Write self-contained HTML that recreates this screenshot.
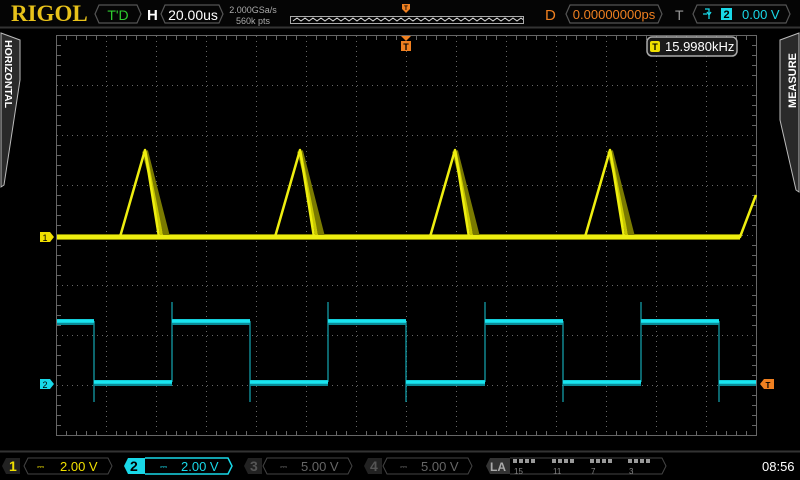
<!DOCTYPE html>
<html><head><meta charset="utf-8"><style>
body{margin:0;width:800px;height:480px;background:#000;overflow:hidden;font-family:"Liberation Sans",sans-serif}
svg{position:absolute;left:0;top:0}
</style></head><body>
<svg width="800" height="480" viewBox="0 0 800 480" xmlns="http://www.w3.org/2000/svg" font-family="Liberation Sans, sans-serif">
<defs><clipPath id="zz"><rect x="291" y="16" width="232" height="8"/></clipPath></defs>
<rect width="800" height="480" fill="#000"/>
<rect x="0" y="0" width="800" height="27" fill="#050505"/>
<line x1="0" y1="27.5" x2="800" y2="27.5" stroke="#333" stroke-width="2"/>
<text x="11" y="21" font-family="Liberation Serif, serif" font-weight="bold" font-size="23" fill="#e8c21a">RIGOL</text>
<path d="M99 5 L137 5 L141 14 L137 23 L99 23 L95 14 Z" fill="none" stroke="#555" stroke-width="1.2"/>
<text x="118" y="20" font-size="14" fill="#2ecc2e" text-anchor="middle">T'D</text>
<text x="147" y="20" font-size="15" font-weight="bold" fill="#fff">H</text>
<path d="M165 5 L219 5 L223 14 L219 23 L165 23 L161 14 Z" fill="none" stroke="#555" stroke-width="1.2"/>
<text x="193" y="20" font-size="14" fill="#fff" text-anchor="middle">20.00us</text>
<text x="253" y="13" font-size="9" fill="#aaa" text-anchor="middle">2.000GSa/s</text>
<text x="253" y="24" font-size="9" fill="#aaa" text-anchor="middle">560k pts</text>
<rect x="290.5" y="16.5" width="233" height="7" fill="none" stroke="#aaa"/>
<path clip-path="url(#zz)" d="M293 21 l4 -3 4 3 4 -3 4 3 4 -3 4 3 4 -3 4 3 4 -3 4 3 4 -3 4 3 4 -3 4 3 4 -3 4 3 4 -3 4 3 4 -3 4 3 4 -3 4 3 4 -3 4 3 4 -3 4 3 4 -3 4 3 4 -3 4 3 4 -3 4 3 4 -3 4 3 4 -3 4 3 4 -3 4 3 4 -3 4 3 4 -3 4 3 4 -3 4 3 4 -3 4 3 4 -3 4 3 4 -3 4 3 4 -3 4 3 4 -3 4 3 4 -3 4 3 4 -3 4 3 4 -3 4 3 4 -3 4 3 4 -3 4 3 4 -3 4 3" fill="none" stroke="#ddd" stroke-width="1"/>
<path d="M402 4 h8 v5 l-4 4 l-4 -4 Z" fill="#f08020"/><text x="406" y="10" font-size="6" fill="#000" text-anchor="middle" font-weight="bold">T</text>
<text x="545" y="20" font-size="15" fill="#f08020">D</text>
<path d="M570 5 L658 5 L662 14 L658 23 L570 23 L566 14 Z" fill="none" stroke="#555" stroke-width="1.2"/>
<text x="614" y="19" font-size="13" fill="#f08020" text-anchor="middle">0.00000000ps</text>
<text x="675" y="20" font-size="14" fill="#999">T</text>
<path d="M697 5 L786 5 L790 14 L786 23 L697 23 L693 14 Z" fill="none" stroke="#555" stroke-width="1.2"/>
<path d="M705 9 h4 v10 M707 12 l2 3 2 -3 M703 14 h4" stroke="#19d8e8" fill="none" stroke-width="1.3"/>
<rect x="721" y="8" width="11" height="12" fill="#19d8e8"/><text x="726.5" y="18" font-size="11" fill="#000" text-anchor="middle" font-weight="bold">2</text>
<text x="742" y="19" font-size="13" fill="#19d8e8">0.00 V</text>
<path d="M1 33 L20 40 L20 80 L4 185 L1 187 Z" fill="#2a2a2a" stroke="#bbb" stroke-width="1"/>
<text transform="translate(5,40) rotate(90)" font-size="10.5" font-weight="bold" fill="#fff">HORIZONTAL</text>
<path d="M799 33 L780 40 L780 120 L796 190 L799 192 Z" fill="#2a2a2a" stroke="#bbb" stroke-width="1"/>
<text transform="translate(796,108) rotate(-90)" font-size="11" font-weight="bold" fill="#fff">MEASURE</text>
<g stroke="#666" stroke-width="1" stroke-dasharray="1,4">
<line x1="106.5" y1="36" x2="106.5" y2="435"/><line x1="156.5" y1="36" x2="156.5" y2="435"/><line x1="206.5" y1="36" x2="206.5" y2="435"/><line x1="256.5" y1="36" x2="256.5" y2="435"/><line x1="306.5" y1="36" x2="306.5" y2="435"/><line x1="356.5" y1="36" x2="356.5" y2="435"/><line x1="406.5" y1="36" x2="406.5" y2="435"/><line x1="456.5" y1="36" x2="456.5" y2="435"/><line x1="506.5" y1="36" x2="506.5" y2="435"/><line x1="556.5" y1="36" x2="556.5" y2="435"/><line x1="606.5" y1="36" x2="606.5" y2="435"/><line x1="656.5" y1="36" x2="656.5" y2="435"/><line x1="706.5" y1="36" x2="706.5" y2="435"/>
<line x1="57" y1="85.5" x2="756" y2="85.5"/><line x1="57" y1="135.5" x2="756" y2="135.5"/><line x1="57" y1="185.5" x2="756" y2="185.5"/><line x1="57" y1="235.5" x2="756" y2="235.5"/><line x1="57" y1="285.5" x2="756" y2="285.5"/><line x1="57" y1="335.5" x2="756" y2="335.5"/><line x1="57" y1="385.5" x2="756" y2="385.5"/>
</g>
<rect x="56.5" y="35.5" width="700" height="400" fill="none" stroke="#666"/>
<g stroke="#666">
<path d="M66.5 36v4M76.5 36v4M86.5 36v4M96.5 36v4M116.5 36v4M126.5 36v4M136.5 36v4M146.5 36v4M166.5 36v4M176.5 36v4M186.5 36v4M196.5 36v4M216.5 36v4M226.5 36v4M236.5 36v4M246.5 36v4M266.5 36v4M276.5 36v4M286.5 36v4M296.5 36v4M316.5 36v4M326.5 36v4M336.5 36v4M346.5 36v4M366.5 36v4M376.5 36v4M386.5 36v4M396.5 36v4M416.5 36v4M426.5 36v4M436.5 36v4M446.5 36v4M466.5 36v4M476.5 36v4M486.5 36v4M496.5 36v4M516.5 36v4M526.5 36v4M536.5 36v4M546.5 36v4M566.5 36v4M576.5 36v4M586.5 36v4M596.5 36v4M616.5 36v4M626.5 36v4M636.5 36v4M646.5 36v4M666.5 36v4M676.5 36v4M686.5 36v4M696.5 36v4M716.5 36v4M726.5 36v4M736.5 36v4M746.5 36v4"/>
<path d="M66.5 435v-4M76.5 435v-4M86.5 435v-4M96.5 435v-4M116.5 435v-4M126.5 435v-4M136.5 435v-4M146.5 435v-4M166.5 435v-4M176.5 435v-4M186.5 435v-4M196.5 435v-4M216.5 435v-4M226.5 435v-4M236.5 435v-4M246.5 435v-4M266.5 435v-4M276.5 435v-4M286.5 435v-4M296.5 435v-4M316.5 435v-4M326.5 435v-4M336.5 435v-4M346.5 435v-4M366.5 435v-4M376.5 435v-4M386.5 435v-4M396.5 435v-4M416.5 435v-4M426.5 435v-4M436.5 435v-4M446.5 435v-4M466.5 435v-4M476.5 435v-4M486.5 435v-4M496.5 435v-4M516.5 435v-4M526.5 435v-4M536.5 435v-4M546.5 435v-4M566.5 435v-4M576.5 435v-4M586.5 435v-4M596.5 435v-4M616.5 435v-4M626.5 435v-4M636.5 435v-4M646.5 435v-4M666.5 435v-4M676.5 435v-4M686.5 435v-4M696.5 435v-4M716.5 435v-4M726.5 435v-4M736.5 435v-4M746.5 435v-4"/>
<path d="M57 45.5h4M57 55.5h4M57 65.5h4M57 75.5h4M57 95.5h4M57 105.5h4M57 115.5h4M57 125.5h4M57 145.5h4M57 155.5h4M57 165.5h4M57 175.5h4M57 195.5h4M57 205.5h4M57 215.5h4M57 225.5h4M57 245.5h4M57 255.5h4M57 265.5h4M57 275.5h4M57 295.5h4M57 305.5h4M57 315.5h4M57 325.5h4M57 345.5h4M57 355.5h4M57 365.5h4M57 375.5h4M57 395.5h4M57 405.5h4M57 415.5h4M57 425.5h4"/>
<path d="M756 45.5h-4M756 55.5h-4M756 65.5h-4M756 75.5h-4M756 95.5h-4M756 105.5h-4M756 115.5h-4M756 125.5h-4M756 145.5h-4M756 155.5h-4M756 165.5h-4M756 175.5h-4M756 195.5h-4M756 205.5h-4M756 215.5h-4M756 225.5h-4M756 245.5h-4M756 255.5h-4M756 265.5h-4M756 275.5h-4M756 295.5h-4M756 305.5h-4M756 315.5h-4M756 325.5h-4M756 345.5h-4M756 355.5h-4M756 365.5h-4M756 375.5h-4M756 395.5h-4M756 405.5h-4M756 415.5h-4M756 425.5h-4"/>
</g>
<path d="M401 36 h10 l-5 5 Z" fill="#f08020"/><rect x="401" y="41" width="10" height="10" fill="#f08020"/><text x="406" y="50" font-size="9" font-weight="bold" fill="#000" text-anchor="middle">T</text>
<rect x="647" y="37" width="90" height="19" rx="5" fill="#1a1a1a" stroke="#aaa" stroke-width="1.5"/>
<rect x="650" y="41" width="10" height="11" rx="2" fill="#f0e000"/><text x="655" y="50" font-size="9" font-weight="bold" fill="#000" text-anchor="middle">T</text>
<text x="665" y="51" font-size="13" fill="#fff">15.9980kHz</text>
<g fill="none" stroke-linejoin="round">
<path d="M57 237 H740" stroke="#8a8a00" stroke-width="6"/>
<path d="M145 151 L167 237 M300 151 L322 237 M455 151 L477 237 M610 151 L632 237" stroke="#7a7a00" stroke-width="6"/>
<path d="M145 151 L162 237 M300 151 L317 237 M455 151 L472 237 M610 151 L627 237" stroke="#c8c800" stroke-width="3"/>
<path d="M57 237 H120 L145 150 L159 237 H275 L300 150 L314 237 H430 L455 150 L469 237 H585 L610 150 L624 237 H740 L756 195" stroke="#eeee10" stroke-width="2.5"/>
<path d="M57 237 H740" stroke="#eeee10" stroke-width="4"/>
</g>
<g fill="none">
<path d="M94 321 V402 M172 382 V302 M250 321 V402 M328 382 V302 M406 321 V402 M485 382 V302 M563 321 V402 M641 382 V302 M719 321 V402" stroke="#14a8b4" stroke-width="1.2"/>
<path d="M57 322 H94 M94 383 H172 M172 322 H250 M250 383 H328 M328 322 H406 M406 383 H485 M485 322 H563 M563 383 H641 M641 322 H719 M719 383 H756" stroke="#0a8a96" stroke-width="6"/>
<path d="M57 321 H94 M94 382 H172 M172 321 H250 M250 382 H328 M328 321 H406 M406 382 H485 M485 321 H563 M563 382 H641 M641 321 H719 M719 382 H756" stroke="#19e5f0" stroke-width="3.5"/>
</g>
<path d="M40 232 h10 l4 5 l-4 5 h-10 Z" fill="#f0e000"/><text x="45" y="241" font-size="9" fill="#000" text-anchor="middle">1</text>
<path d="M40 379 h10 l4 5 l-4 5 h-10 Z" fill="#19d8e8"/><text x="45" y="388" font-size="9" fill="#000" text-anchor="middle">2</text>
<path d="M760 384 l4 -5 h10 v10 h-10 Z" fill="#f08020"/><text x="768" y="388" font-size="8" font-weight="bold" fill="#000" text-anchor="middle">T</text>
<line x1="0" y1="451.5" x2="800" y2="451.5" stroke="#333" stroke-width="2"/>
<path d="M2 466 L6 458 H20 V474 H6 Z" fill="#222"/>
<text x="9" y="471" font-size="14" font-weight="bold" fill="#f0e000">1</text>
<path d="M28 458 H108 L112 466 L108 474 H28 L24 466 Z" fill="none" stroke="#444"/>
<text x="37" y="470" font-size="9" fill="#f0e000">⎓</text>
<text x="60" y="471" font-size="13" fill="#f0e000">2.00 V</text>
<path d="M124 466 L128 458 H145 V474 H128 Z" fill="#19d8e8"/>
<text x="130" y="471" font-size="14" font-weight="bold" fill="#000">2</text>
<path d="M145 458 H228 L232 466 L228 474 H145" fill="none" stroke="#19d8e8" stroke-width="1.5"/>
<text x="160" y="470" font-size="9" fill="#19d8e8">⎓</text>
<text x="181" y="471" font-size="13" fill="#19d8e8">2.00 V</text>
<path d="M244 466 L248 458 H262 V474 H248 Z" fill="#222"/>
<text x="250" y="471" font-size="14" font-weight="bold" fill="#555">3</text>
<path d="M267 458 H348 L352 466 L348 474 H267 L263 466 Z" fill="none" stroke="#444"/>
<text x="280" y="470" font-size="9" fill="#666">⎓</text>
<text x="301" y="471" font-size="13" fill="#666">5.00 V</text>
<path d="M364 466 L368 458 H382 V474 H368 Z" fill="#222"/>
<text x="370" y="471" font-size="14" font-weight="bold" fill="#555">4</text>
<path d="M387 458 H468 L472 466 L468 474 H387 L383 466 Z" fill="none" stroke="#444"/>
<text x="400" y="470" font-size="9" fill="#666">⎓</text>
<text x="421" y="471" font-size="13" fill="#666">5.00 V</text>
<path d="M486 466 L490 458 H510 V474 H490 Z" fill="#333"/>
<path d="M510 458 H662 L666 466 L662 474 H510" fill="none" stroke="#444"/>
<text x="490" y="471" font-size="12" font-weight="bold" fill="#aaa">LA</text>
<g fill="#999">
<rect x="513" y="459" width="4" height="4"/><rect x="519" y="459" width="4" height="4"/><rect x="525" y="459" width="4" height="4"/><rect x="531" y="459" width="4" height="4"/>
<rect x="552" y="459" width="4" height="4"/><rect x="558" y="459" width="4" height="4"/><rect x="564" y="459" width="4" height="4"/><rect x="570" y="459" width="4" height="4"/>
<rect x="590" y="459" width="4" height="4"/><rect x="596" y="459" width="4" height="4"/><rect x="602" y="459" width="4" height="4"/><rect x="608" y="459" width="4" height="4"/>
<rect x="628" y="459" width="4" height="4"/><rect x="634" y="459" width="4" height="4"/><rect x="640" y="459" width="4" height="4"/><rect x="646" y="459" width="4" height="4"/>
</g>
<g font-size="8" fill="#888"><text x="514" y="474">15</text><text x="553" y="474">11</text><text x="591" y="474">7</text><text x="629" y="474">3</text></g>
<text x="762" y="471" font-size="13" fill="#fff">08:56</text>
</svg>
</body></html>
